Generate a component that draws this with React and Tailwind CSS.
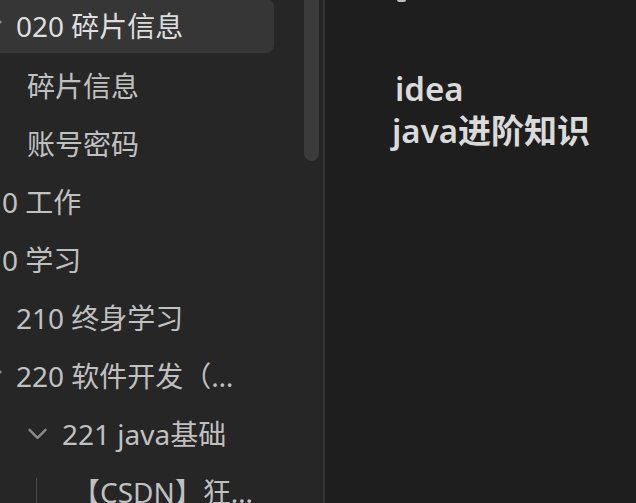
import React from "react";

const font = { fontFamily: '"Noto Sans", "Noto Sans CJK SC", sans-serif' };

function Chevron() {
  return (
    <svg width="19" height="12" viewBox="0 0 19 12" className="shrink-0">
      <path d="M1.5 1.8 L9.5 9.8 L17.5 1.8" fill="none" stroke="#8a8a8a" strokeWidth="2.4" strokeLinecap="round" strokeLinejoin="round" />
    </svg>
  );
}

export default function App() {
  return (
    <div className="flex h-[503px] w-[636px] overflow-hidden bg-[#1e1e1e]" style={font}>
      {/* Sidebar */}
      <div className="flex h-full w-[323px] shrink-0 overflow-hidden bg-[#262626]">
        <div className="flex w-[304px] shrink-0 flex-col overflow-hidden -mt-[1px] text-[28px] text-[#c0c0c0]">
          {/* row 1 selected */}
          <div className="mb-[4px] flex h-[54px] w-[291px] shrink-0 items-center gap-[14px] -ml-[17px] rounded-lg bg-[#363636] text-[#dedede]">
            <Chevron />
            <span className="truncate pr-4">020 碎片信息</span>
          </div>
          <div className="flex h-[58px] shrink-0 items-center pl-[27px]">
            <span className="truncate">碎片信息</span>
          </div>
          <div className="flex h-[58px] shrink-0 items-center pl-[27px]">
            <span className="truncate">账号密码</span>
          </div>
          <div className="flex h-[58px] shrink-0 items-center pl-[2px]">
            <span className="truncate">0 工作</span>
          </div>
          <div className="flex h-[58px] shrink-0 items-center pl-[2px]">
            <span className="truncate">0 学习</span>
          </div>
          <div className="flex h-[58px] shrink-0 items-center pl-[16px]">
            <span className="truncate">210 终身学习</span>
          </div>
          <div className="flex h-[58px] w-[291px] shrink-0 items-center gap-[14px] -ml-[17px]">
            <Chevron />
            <span className="min-w-0 truncate pr-[30px]">220 软件开发（前端后端）</span>
          </div>
          <div className="flex h-[58px] w-[274px] shrink-0 items-center gap-[15px] pl-[28px]">
            <Chevron />
            <span className="min-w-0 truncate">221 java基础</span>
          </div>
          <div className="flex h-[58px] w-[274px] shrink-0 items-center">
            <div className="ml-[36px] mt-[30px] h-[58px] w-px shrink-0 bg-[#4a4a4a]" />
            <span className="ml-[35px] min-w-0 truncate pr-[14px]">【CSDN】狂神说Java</span>
          </div>
        </div>
        {/* scrollbar */}
        <div className="w-[19px] shrink-0">
          <div className="h-[161px] w-[15px] rounded-b-[8px] bg-[#3b3b3b]" />
        </div>
      </div>
      {/* divider */}
      <div className="h-full w-[2px] shrink-0 bg-[#353535]" />
      {/* main */}
      <div className="flex flex-1 flex-col pl-[67px]">
        <div className="ml-[5px] h-[2px] w-[9px] rounded-b bg-[#bdbdbd]" />
        <div className="mt-[66px] text-[33px] font-semibold leading-[42px] text-[#dadada]">
          <div className="pl-[3px]">idea</div>
          <div>java进阶知识</div>
        </div>
      </div>
    </div>
  );
}
